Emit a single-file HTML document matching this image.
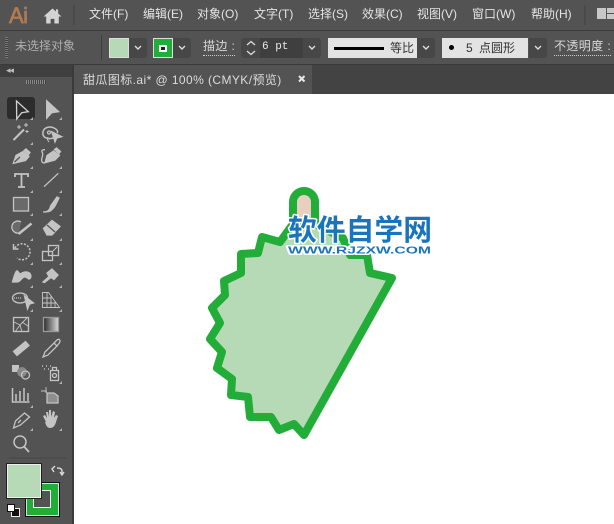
<!DOCTYPE html>
<html><head><meta charset="utf-8">
<style>
html,body{margin:0;padding:0;width:614px;height:524px;overflow:hidden;background:#535353}
body{position:relative;font-family:"Liberation Sans","Noto Sans CJK SC",sans-serif}
.a{position:absolute;white-space:nowrap}
.m{top:5px;font-size:12px;line-height:18px;color:#e4e4e4}
.c{font-size:12px;line-height:16px;color:#d8d8d8}
.dd{position:absolute;top:38px;height:20px;background:#474747;border-radius:0 3px 3px 0;border:1px solid #474747;box-sizing:border-box}
.dd svg{position:absolute;left:50%;top:50%;margin:-3px 0 0 -4px}
.u{border-bottom:1px dotted #ccc}
</style></head><body>
<!-- top bars -->
<div class="a" style="left:0;top:30px;width:614px;height:1px;background:#3c3c3c"></div>
<div class="a" style="left:0;top:31px;width:614px;height:33px;background:#535353"></div>
<div class="a" style="left:0;top:64px;width:614px;height:30px;background:#434343"></div>
<div class="a" style="left:0;top:64px;width:614px;height:1px;background:#3a3a3a"></div>
<div class="a" style="left:9px;top:-1px;font:22px/34px 'Liberation Sans',sans-serif;color:#b07a54;letter-spacing:-.5px;-webkit-text-stroke:.7px #b07a54">Ai</div>
<svg class="a" style="left:43px;top:8px" width="19" height="16" viewBox="0 0 19 17"><path d="M9.5 0.5L0 9h2.8v7.5h4.7v-5h4v5h4.7V9H19L15.5 5.8V1.5h-2.3v2.2z" fill="#d4d4d4"/></svg>
<div class="a" style="left:73px;top:5px;width:2px;height:20px;background:#4a4a4a"></div>
<div class="a m" style="left:89px">文件(F)</div>
<div class="a m" style="left:143px">编辑(E)</div>
<div class="a m" style="left:197px">对象(O)</div>
<div class="a m" style="left:254px">文字(T)</div>
<div class="a m" style="left:308px">选择(S)</div>
<div class="a m" style="left:362px">效果(C)</div>
<div class="a m" style="left:417px">视图(V)</div>
<div class="a m" style="left:472px">窗口(W)</div>
<div class="a m" style="left:531px">帮助(H)</div>
<div class="a" style="left:584px;top:5px;width:2px;height:20px;background:#4a4a4a"></div>
<div class="a" style="left:597px;top:8px;width:9px;height:11px;background:#c8c8c8"></div>
<div class="a" style="left:607px;top:8px;width:7px;height:5px;background:#c8c8c8"></div>
<div class="a" style="left:607px;top:14px;width:7px;height:5px;background:#c8c8c8"></div>

<!-- control bar -->
<div class="a" style="left:5px;top:37px;width:3px;height:21px;background:repeating-linear-gradient(#7a7a7a 0 1px,#3f3f3f 1px 2px)"></div>
<div class="a c" style="left:15px;top:38px;color:#aeaeae">未选择对象</div>
<div class="a" style="left:101px;top:35px;width:1px;height:25px;background:#3f3f3f"></div>
<div class="a" style="left:109px;top:38px;width:20px;height:20px;background:#b5dab5;box-sizing:border-box;border:1px solid #ddd"></div>
<div class="dd" style="left:129px;width:18px"><svg width="8" height="6"><path d="M1 1l3 3 3-3" fill="none" stroke="#ddd" stroke-width="1.4"/></svg></div>
<div class="a" style="left:153px;top:38px;width:20px;height:20px;background:#22ac38;box-sizing:border-box;border:1px solid #ddd"></div>
<div class="a" style="left:159px;top:45px;width:8px;height:7px;background:#222;border:2px solid #fff;box-sizing:border-box"></div>
<div class="dd" style="left:173px;width:18px"><svg width="8" height="6"><path d="M1 1l3 3 3-3" fill="none" stroke="#ddd" stroke-width="1.4"/></svg></div>
<div class="a c u" style="left:203px;top:38px;padding-bottom:1px;letter-spacing:.4px">描边 :</div>
<div class="a" style="left:241px;top:38px;width:19px;height:20px;background:#474747;border-radius:3px 0 0 3px"></div>
<svg class="a" style="left:245px;top:40px" width="12" height="16"><path d="M2 5l4-3.5L10 5M2 11l4 3.500L10 11" fill="none" stroke="#ddd" stroke-width="1.3"/></svg>
<div class="a" style="left:260px;top:38px;width:43px;height:20px;background:#3f3f3f"></div>
<div class="a" style="left:262px;top:39px;font:11px/16px 'Liberation Mono',monospace;color:#e8e8e8">6 pt</div>
<div class="dd" style="left:303px;width:18px"><svg width="8" height="6"><path d="M1 1l3 3 3-3" fill="none" stroke="#ddd" stroke-width="1.4"/></svg></div>
<div class="a" style="left:328px;top:38px;width:89px;height:20px;background:#e3e3e3"></div>
<div class="a" style="left:334px;top:47px;width:50px;height:3px;background:#000"></div>
<div class="a c" style="left:390px;top:40px;color:#333">等比</div>
<div class="dd" style="left:417px;width:18px"><svg width="8" height="6"><path d="M1 1l3 3 3-3" fill="none" stroke="#ddd" stroke-width="1.4"/></svg></div>
<div class="a" style="left:442px;top:38px;width:86px;height:20px;background:#e3e3e3"></div>
<div class="a" style="left:449px;top:45px;width:5px;height:5px;border-radius:50%;background:#000"></div>
<div class="a c" style="left:466px;top:40px;color:#333;word-spacing:3px">5 点圆形</div>
<div class="dd" style="left:529px;width:18px"><svg width="8" height="6"><path d="M1 1l3 3 3-3" fill="none" stroke="#ddd" stroke-width="1.4"/></svg></div>
<div class="a c u" style="left:554px;top:38px;padding-bottom:1px;letter-spacing:.4px">不透明度 :</div>

<!-- tab -->
<div class="a" style="left:73px;top:65px;width:239px;height:29px;background:#535353"></div>
<div class="a" style="left:83px;top:71px;font-size:12px;line-height:18px;color:#dcdcdc;letter-spacing:.42px">甜瓜图标.ai* @ 100% (CMYK/预览)</div>
<svg class="a" style="left:298px;top:75px" width="8" height="8"><path d="M1 1l5.500 5.500M6.500 1L1 6.500" stroke="#e8e8e8" stroke-width="2"/></svg>

<!-- left panel -->
<div class="a" style="left:0;top:65px;width:72px;height:12px;background:#3f3f3f"></div>
<div class="a" style="left:6px;top:64px;font-size:9px;line-height:12px;color:#bbb;letter-spacing:-1px">◂◂</div>
<div class="a" style="left:0;top:77px;width:72px;height:447px;background:#535353"></div>
<div class="a" style="left:72px;top:65px;width:2px;height:459px;background:#3a3a3a"></div>
<div class="a" style="left:26px;top:80px;width:20px;height:4px;background:repeating-linear-gradient(90deg,#8a8a8a 0 1px,#444 1px 2px)"></div>
<div class="a" style="left:7px;top:97px;width:28px;height:22px;background:#2c2c2c;border-radius:3px"></div>

<!-- tools -->
<svg class="a" style="left:0;top:90px" width="72" height="434" viewBox="0 90 72 434" fill="none" stroke="#c4c4c4" stroke-width="1.3">
<path d="M16.500 101L28.300 111.700 21.700 112.700 16.700 119z" stroke="#d0d0d0"/>
<path d="M46.700 100.700L58.700 111.700 51.700 112.700 46.700 118.300z" fill="#c4c4c4"/>
<path d="M13.500 140L24 129.500" stroke-width="2"/><path d="M19 125v4M17 127h4M26 123v4M24 125h4M27 130v3M25.500 131.500h3" stroke-width="1"/>
<path d="M53 138c-6 2-11-1-10-6s7-6 11-4 4 4 3 5" stroke-width="1.500"/><circle cx="49" cy="132.500" r="1.500"/><path d="M48 137c-1 2 0 4 1 5" stroke-width="1"/><path d="M51.700 131.700L61.700 136.700 56.700 138 55 142z" fill="#c4c4c4"/>
<path d="M13.300 163.300L16 155.500 23 151.500 29 156.500 25.500 160.500z" fill="#c4c4c4"/><path d="M14.500 162L20 157" stroke="#535353"/><path d="M24 150.500l2-1.500 4 3.500-1.500 2z" fill="#c4c4c4"/>
<path d="M45 162.700L47 155.500 53.500 151 59.500 155.500 55 160z" fill="#c4c4c4"/><path d="M54.500 149.500l2-1.500 4 3.500-1.500 2z" fill="#c4c4c4"/><path d="M45 162.700c-3 1-4-2-3-5s1-4 0-6 2-2 3-2"/>
<path d="M15 177v-3h13v3M21.500 174v13M18 187h7" stroke-width="1.800"/>
<path d="M44 186.700L58.300 173.300"/>
<rect x="13.500" y="197.500" width="15" height="13.500" fill="#6a6a6a"/>
<path d="M43 212c4 0 6-1 7-4s1-3 2-4l5-7 2 1-4 8c-2 3-3 4-5 5s-4 1-7 1z" fill="#c4c4c4"/>
<path d="M21 222a6 6 0 1 0 -2 11" fill="#6a6a6a"/><path d="M18.500 234L31.500 223.500" stroke-width="2.500"/>
<path d="M43.500 228.500L52 220.500 60 226.500 52 235 47 235z" fill="#c4c4c4"/><path d="M47 225l8 7" stroke="#535353"/>
<path d="M15 248a8 8 0 1 1 2 10" stroke-dasharray="2 1.500" stroke-width="1.500"/><path d="M13.500 244v5h5" stroke-width="1.500"/>
<rect x="42.500" y="251.500" width="10" height="9"/><rect x="48.500" y="245.500" width="10" height="10"/><path d="M53 251l4-4" stroke-width="1"/>
<path d="M12.500 282c1-4 2-8 4-11 2-1 2 3 4 3 2-2 6-3 9-1 2 2 2 6-1 6-2-2-4-3-6-1s-3 4-6 4z" fill="#c4c4c4"/>
<path d="M43 282L49 276.500 47 273 52 269 58 275 54 279.500 51 277.500 44.500 282.500z" fill="#c4c4c4"/>
<ellipse cx="20" cy="298" rx="7.500" ry="5"/><path d="M14 298h8" stroke-dasharray="1 1"/><path d="M24.500 296L33.500 303 29.500 304 27.500 309z" fill="#c4c4c4"/>
<path d="M42.500 292.500h6l11 15h-17zM42.500 298h9M42.500 303h14M47 293v14M51 296v11M55 302v5" stroke-width=".9"/>
<rect x="13.500" y="317.500" width="15" height="14"/><path d="M14 322l6 3 7-7M20 325l2 7M20 325l-5 7M22 322l6 4" stroke-width=".9"/>
<defs><linearGradient id="g"><stop offset="0" stop-color="#2a2a2a"/><stop offset="1" stop-color="#dcdcdc"/></linearGradient></defs>
<rect x="43.500" y="317.500" width="15" height="14" fill="url(#g)" stroke="#999"/>
<path d="M13.500 351.500L25.500 341.500 29 345.500 17 355.500z" fill="#c4c4c4"/>
<path d="M43 357L45 352 54 343 57 346 48 355zM54 343l3-3c1-1 3-1 3 1s-1 2-3 5" fill="none"/>
<rect x="12" y="365" width="7" height="7" fill="#c4c4c4" stroke="none"/><circle cx="22" cy="372" r="5" fill="#888" stroke="none"/><circle cx="25.500" cy="375" r="4"/>
<path d="M42 366h1M46 366h1M50 366h1M44 369h1M48 369h1" stroke-width="1.500"/><rect x="50.500" y="370.500" width="8" height="10"/><circle cx="54.500" cy="375.500" r="2"/><path d="M52.500 370.500v-3h4v3"/>
<path d="M12.500 388v14h17M16 401v-7M20 401v-10M24 401v-13M28 401v-8" stroke-width="1.500"/>
<path d="M46 387v6M41 391h6" stroke-width=".9"/><path d="M47 393h7l4 3v7H47z" fill="#8e8e8e"/>
<path d="M13.500 428l2-7 9-8 5 4-9 8zM18 423l3-3"/>
<path d="M46 422l-3-6 2-1 2 3-1-6 2 0 1 5 0-7h2l0 7 2-6 2 1-1 6 2-3 2 1-2 6c-1 4-3 6-6 6s-4-3-5-6z" fill="#c4c4c4" stroke="none"/>
<circle cx="20" cy="442" r="6" stroke-width="1.500"/><path d="M24 446.500l5 5.500" stroke-width="1.800"/>
<path d="M9 458h57" stroke="#474747" stroke-width="1"/>
<path d="M62 474v-3c0-2-2-3-5-3M54 472l-2 -3 3-3M60 472l2 3 2-3" stroke-width="1.400" stroke="#d8d8d8"/>
<g fill="#b0b0b0" stroke="none">
<path d="M33 117l-3 3h3zM62 117l-3 3h3zM33 142l-3 3h3zM62 166l-3 3h3zM33 166l-3 3h3zM33 190l-3 3h3zM62 190l-3 3h3zM33 213l-3 3h3zM62 213l-3 3h3zM33 238l-3 3h3zM62 238l-3 3h3zM33 262l-3 3h3zM62 262l-3 3h3zM33 285l-3 3h3zM62 285l-3 3h3zM33 309l-3 3h3zM62 309l-3 3h3zM62 381l-3 3h3zM33 405l-3 3h3zM33 428l-3 3h3zM62 428l-3 3h3z"/>
</g>
</svg>

<!-- stroke box -->
<div class="a" style="left:25px;top:482px;width:35px;height:35px;background:#22ac38;box-sizing:border-box;border:1px solid #111;outline:1px solid #ddd;outline-offset:-2px"></div>
<div class="a" style="left:33px;top:490px;width:18px;height:18px;background:#535353;box-sizing:border-box;border:1px solid #eee"></div>
<div class="a" style="left:6px;top:463px;width:36px;height:36px;background:#b5dab5;box-sizing:border-box;border:1px solid #222;outline:1px solid #eee;outline-offset:-2px"></div>
<div class="a" style="left:11px;top:508px;width:7px;height:7px;background:#111;border:1px solid #eee"></div>
<div class="a" style="left:7px;top:504px;width:6px;height:6px;background:#fff;border:1px solid #111"></div>

<!-- canvas -->
<div class="a" style="left:74px;top:94px;width:540px;height:430px;background:#fff"></div>
<svg class="a" style="left:74px;top:94px" width="540" height="430" viewBox="74 94 540 430">
<path d="M293 232V202a11 11 0 0 1 22 0V232z" fill="#e8cfbf" stroke="#22ac38" stroke-width="8" stroke-linejoin="round"/>
<path d="M304 435L294 424 279 430 271 417H250L248 397 231 395 232 379 217 368 222 352 210 339 220 323 212 308 225 295 224 281 241 273V254L258 253 262 237 280 242 293 224H315L343 238 350 255H367L370 273 392 278Z" fill="#b5dab5" stroke="#22ac38" stroke-width="8" stroke-linejoin="round"/>
<g style="paint-order:stroke" stroke="#fff" stroke-width="3" stroke-linejoin="round">
<text x="288" y="240" font-family="'Noto Sans CJK SC',sans-serif" font-weight="700" font-size="29" textLength="144" lengthAdjust="spacingAndGlyphs" fill="#1a74bc">软件自学网</text>
<text x="288" y="253.500" font-family="'Liberation Sans',sans-serif" font-weight="700" font-size="10" textLength="143" lengthAdjust="spacingAndGlyphs" fill="#1a74bc">WWW.RJZXW.COM</text>
</g>
</svg>
</body></html>
